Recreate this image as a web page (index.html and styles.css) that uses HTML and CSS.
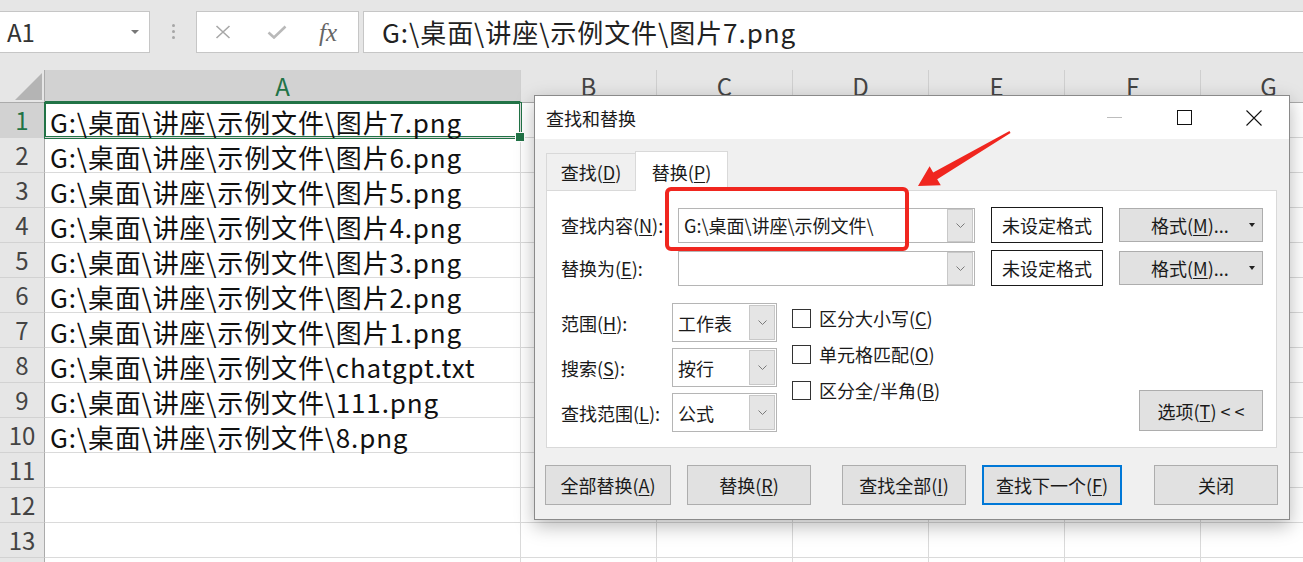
FILE: index.html
```html
<!DOCTYPE html>
<html lang="zh-CN">
<head>
  <meta charset="UTF-8" />
  <title>查找和替换</title>
  <link rel="stylesheet" href="styles.css">
</head>
<body>
<div class="app">

  <!-- barre de formule -->
  <div class="formula-bar">
    <div class="name-box"><span>A1</span><span class="caret"></span></div>
    <div class="grip"><i></i><i></i><i></i></div>
    <div class="fx-box">
      <svg class="ico-x" width="16" height="14" viewBox="0 0 16 14"><path d="M1.5 1 L14.5 13 M14.5 1 L1.5 13" stroke="#a8a8a8" stroke-width="1.6" fill="none"/></svg>
      <svg class="ico-ok" width="20" height="14" viewBox="0 0 20 14"><path d="M1.5 7.5 L7 12.5 L18.5 1.5" stroke="#b9b9b9" stroke-width="2.6" fill="none"/></svg>
      <span class="fx">fx</span>
    </div>
    <div class="formula-input">G:\桌面\讲座\示例文件\图片7.png</div>
  </div>

  <!-- feuille -->
  <div class="sheet">
    <div class="corner"></div>
    <div class="ch on">A</div><div class="ch">B</div><div class="ch">C</div><div class="ch">D</div><div class="ch">E</div><div class="ch">F</div><div class="ch">G</div>

    <div class="rh on">1</div><div class="c sel">G:\桌面\讲座\示例文件\图片7.png</div><div class="c"></div><div class="c"></div><div class="c"></div><div class="c"></div><div class="c"></div><div class="c"></div>
    <div class="rh">2</div><div class="c">G:\桌面\讲座\示例文件\图片6.png</div><div class="c"></div><div class="c"></div><div class="c"></div><div class="c"></div><div class="c"></div><div class="c"></div>
    <div class="rh">3</div><div class="c">G:\桌面\讲座\示例文件\图片5.png</div><div class="c"></div><div class="c"></div><div class="c"></div><div class="c"></div><div class="c"></div><div class="c"></div>
    <div class="rh">4</div><div class="c">G:\桌面\讲座\示例文件\图片4.png</div><div class="c"></div><div class="c"></div><div class="c"></div><div class="c"></div><div class="c"></div><div class="c"></div>
    <div class="rh">5</div><div class="c">G:\桌面\讲座\示例文件\图片3.png</div><div class="c"></div><div class="c"></div><div class="c"></div><div class="c"></div><div class="c"></div><div class="c"></div>
    <div class="rh">6</div><div class="c">G:\桌面\讲座\示例文件\图片2.png</div><div class="c"></div><div class="c"></div><div class="c"></div><div class="c"></div><div class="c"></div><div class="c"></div>
    <div class="rh">7</div><div class="c">G:\桌面\讲座\示例文件\图片1.png</div><div class="c"></div><div class="c"></div><div class="c"></div><div class="c"></div><div class="c"></div><div class="c"></div>
    <div class="rh">8</div><div class="c">G:\桌面\讲座\示例文件\chatgpt.txt</div><div class="c"></div><div class="c"></div><div class="c"></div><div class="c"></div><div class="c"></div><div class="c"></div>
    <div class="rh">9</div><div class="c">G:\桌面\讲座\示例文件\111.png</div><div class="c"></div><div class="c"></div><div class="c"></div><div class="c"></div><div class="c"></div><div class="c"></div>
    <div class="rh">10</div><div class="c">G:\桌面\讲座\示例文件\8.png</div><div class="c"></div><div class="c"></div><div class="c"></div><div class="c"></div><div class="c"></div><div class="c"></div>
    <div class="rh">11</div><div class="c"></div><div class="c"></div><div class="c"></div><div class="c"></div><div class="c"></div><div class="c"></div><div class="c"></div>
    <div class="rh">12</div><div class="c"></div><div class="c"></div><div class="c"></div><div class="c"></div><div class="c"></div><div class="c"></div><div class="c"></div>
    <div class="rh">13</div><div class="c"></div><div class="c"></div><div class="c"></div><div class="c"></div><div class="c"></div><div class="c"></div><div class="c"></div>
    <div class="rh"></div><div class="c"></div><div class="c"></div><div class="c"></div><div class="c"></div><div class="c"></div><div class="c"></div><div class="c"></div>
  </div>

  <!-- boîte de dialogue -->
  <div class="dialog">
    <div class="dlg-title">
      <span class="t">查找和替换</span>
      <div class="win-btn"><span class="min-line"></span></div>
      <div class="win-btn"><span class="max-sq"></span></div>
      <div class="win-btn"><svg width="16" height="16" viewBox="0 0 16 16"><path d="M0.5 0.5 L15.5 15.5 M15.5 0.5 L0.5 15.5" stroke="#111" stroke-width="1.1" fill="none"/></svg></div>
    </div>

    <div class="dlg-body">
      <div class="tabs">
        <div class="tab">查找(<u>D</u>)</div>
        <div class="tab active">替换(<u>P</u>)</div>
      </div>

      <div class="panel">
        <div class="field-row">
          <label>查找内容(<u>N</u>):</label>
          <div class="combo">
            <span>G:\桌面\讲座\示例文件\</span>
            <span class="drop"><svg width="9" height="5" viewBox="0 0 9 5"><polyline points="0.5,0.5 4.5,4.5 8.5,0.5" fill="none" stroke="#7a7a7a" stroke-width="1"/></svg></span>
          </div>
          <div class="fmt-preview">未设定格式</div>
          <div class="btn fmt-btn"><span>格式(<u>M</u>)...</span><span class="tri"></span></div>
        </div>
        <div class="field-row">
          <label>替换为(<u>E</u>):</label>
          <div class="combo">
            <span></span>
            <span class="drop"><svg width="9" height="5" viewBox="0 0 9 5"><polyline points="0.5,0.5 4.5,4.5 8.5,0.5" fill="none" stroke="#7a7a7a" stroke-width="1"/></svg></span>
          </div>
          <div class="fmt-preview">未设定格式</div>
          <div class="btn fmt-btn"><span>格式(<u>M</u>)...</span><span class="tri"></span></div>
        </div>

        <div class="options">
          <div class="opt-selects">
            <div class="sel-row">
              <label>范围(<u>H</u>):</label>
              <div class="select"><span>工作表</span><span class="drop"><svg width="9" height="5" viewBox="0 0 9 5"><polyline points="0.5,0.5 4.5,4.5 8.5,0.5" fill="none" stroke="#7a7a7a" stroke-width="1"/></svg></span></div>
            </div>
            <div class="sel-row">
              <label>搜索(<u>S</u>):</label>
              <div class="select"><span>按行</span><span class="drop"><svg width="9" height="5" viewBox="0 0 9 5"><polyline points="0.5,0.5 4.5,4.5 8.5,0.5" fill="none" stroke="#7a7a7a" stroke-width="1"/></svg></span></div>
            </div>
            <div class="sel-row">
              <label>查找范围(<u>L</u>):</label>
              <div class="select"><span>公式</span><span class="drop"><svg width="9" height="5" viewBox="0 0 9 5"><polyline points="0.5,0.5 4.5,4.5 8.5,0.5" fill="none" stroke="#7a7a7a" stroke-width="1"/></svg></span></div>
            </div>
          </div>

          <div class="opt-checks">
            <div class="check"><span class="box"></span>区分大小写(<u>C</u>)</div>
            <div class="check"><span class="box"></span>单元格匹配(<u>O</u>)</div>
            <div class="check"><span class="box"></span>区分全/半角(<u>B</u>)</div>
          </div>

          <div class="btn opt-btn">选项(<u>T</u>) &lt; &lt;</div>
        </div>
      </div>

      <div class="actions">
        <div class="btn b-all">全部替换(<u>A</u>)</div>
        <div class="btn b-rep">替换(<u>R</u>)</div>
        <div class="btn b-findall">查找全部(<u>I</u>)</div>
        <div class="btn b-next">查找下一个(<u>F</u>)</div>
        <div class="btn b-close">关闭</div>
      </div>
    </div>
  </div>

  <!-- annotations -->
  <svg class="annot" width="1303" height="562" viewBox="0 0 1303 562">
    <rect x="667" y="189" width="240" height="60" rx="4" fill="none" stroke="#f0261f" stroke-width="4"/>
    <polygon points="1009.5,131.1 933.2,172.4 929.6,166.3 918,186 940.8,185.3 937.2,179.2 1010.5,132.9" fill="#f0261f"/>
  </svg>
</div>
</body>
</html>
```

FILE: styles.css
```css
* {
  box-sizing: border-box;
}

body {
  margin: 0;
  font-family: "Noto Sans CJK SC", sans-serif;
  background: #fff;
  color: #222;
  overflow: hidden;
}

.app {
  position: relative;
  width: 1303px;
  height: 562px;
  overflow: hidden;
}

/* Barre de formule */
.formula-bar {
  height: 70px;
  background: #e6e6e6;
  display: flex;
  align-items: flex-start;
  padding-top: 11px;
}

.name-box {
  width: 151px;
  height: 42px;
  margin-left: -1px;
  background: #fff;
  border: 1px solid #c6c6c6;
  display: flex;
  align-items: center;
  justify-content: space-between;
  padding: 0 10px 0 7px;
  font-size: 24px;
  line-height: 1;
  color: #333;
}

.caret {
  border-left: 4px solid transparent;
  border-right: 4px solid transparent;
  border-top: 4px solid #777;
}

.grip {
  width: 46px;
  display: flex;
  flex-direction: column;
  align-items: center;
  gap: 3px;
  padding-top: 13px;
}

.grip i {
  width: 3px;
  height: 3px;
  border-radius: 50%;
  background: #a6a6a6;
}

.fx-box {
  width: 163px;
  height: 42px;
  background: #fff;
  border: 1px solid #c6c6c6;
  display: flex;
  align-items: center;
  padding-left: 18px;
}

.ico-ok {
  margin-left: 36px;
}

.fx {
  margin-left: 32px;
  font-family: "Liberation Serif", serif;
  font-style: italic;
  font-size: 25px;
  color: #666;
  line-height: 1;
}

.formula-input {
  flex: 1;
  margin-left: 4px;
  height: 42px;
  background: #fff;
  border: 1px solid #c6c6c6;
  border-right: none;
  padding-left: 18px;
  font-size: 26px;
  letter-spacing: 0.95px;
  line-height: 39px;
  color: #222;
  white-space: nowrap;
}

/* Feuille */
.sheet {
  display: grid;
  grid-template-columns: 45px 476px repeat(6, 136px);
  grid-template-rows: 33px;
  grid-auto-rows: 35px;
}

.corner {
  background: #e6e6e6;
  border-right: 1px solid #ababab;
  border-bottom: 1px solid #ababab;
  display: flex;
  align-items: flex-end;
  justify-content: flex-end;
  padding: 0 2px 2px 0;
}

.corner::after {
  content: '';
  border-left: 27px solid transparent;
  border-bottom: 27px solid #b4b4b4;
}

.ch {
  background: #e6e6e6;
  border-right: 1px solid #cfcfcf;
  border-bottom: 1px solid #ababab;
  display: flex;
  align-items: center;
  justify-content: center;
  font-size: 24px;
  line-height: 1;
  color: #444;
}

.ch.on {
  background: #d2d2d2;
  color: #217346;
  border-bottom: 2px solid #217346;
}

.rh {
  background: #e6e6e6;
  border-right: 1px solid #ababab;
  border-bottom: 1px solid #d2d2d2;
  display: flex;
  align-items: center;
  justify-content: center;
  font-size: 24px;
  line-height: 1;
  color: #444;
}

.rh.on {
  background: #d2d2d2;
  color: #217346;
}

.c {
  border-right: 1px solid #dadada;
  border-bottom: 1px solid #dadada;
  font-size: 26px;
  letter-spacing: 0.85px;
  line-height: 31px;
  padding: 3px 0 0 5px;
  white-space: nowrap;
  color: #111;
}

.c.sel {
  position: relative;
  z-index: 1;
  box-shadow: 0 0 0 1px #217346, inset 0 0 0 1px #217346;
}

.c.sel::after {
  content: '';
  position: absolute;
  right: -5px;
  bottom: -5px;
  width: 8px;
  height: 8px;
  background: #217346;
  border: 1px solid #fff;
}

/* Boîte de dialogue */
.dialog {
  position: absolute;
  left: 534px;
  top: 95px;
  width: 756px;
  height: 425px;
  z-index: 3;
  background: #f0f0f0;
  border: 1px solid #8a8a8a;
  box-shadow: 0 6px 18px rgba(0, 0, 0, 0.28);
  font-size: 18px;
  color: #1a1a1a;
  display: flex;
  flex-direction: column;
}

.dlg-title {
  height: 43px;
  flex-shrink: 0;
  background: #fff;
  display: flex;
  align-items: center;
  padding-left: 11px;
}

.dlg-title .t {
  flex: 1;
  line-height: 1;
}

.win-btn {
  width: 70px;
  height: 43px;
  display: flex;
  align-items: center;
  justify-content: center;
}

.min-line {
  width: 15px;
  height: 1px;
  background: #bdbdbd;
}

.max-sq {
  width: 15px;
  height: 15px;
  border: 1px solid #111;
}

.dlg-body {
  padding: 12px 11px 0 11px;
}

u {
  text-decoration: underline;
  text-decoration-thickness: 1px;
  text-underline-offset: 2px;
}

.tabs {
  display: flex;
  align-items: flex-end;
  height: 39px;
}

.tab {
  width: 90px;
  height: 37px;
  display: flex;
  align-items: center;
  justify-content: center;
  background: #f0f0f0;
  border: 1px solid #d9d9d9;
  border-bottom: none;
  line-height: 1;
}

.tab.active {
  width: 93px;
  height: 40px;
  margin-left: -1px;
  margin-bottom: -1px;
  background: #fff;
  position: relative;
  z-index: 1;
}

.panel {
  width: 731px;
  height: 258px;
  background: #fff;
  border: 1px solid #d9d9d9;
  padding: 16px 13px 0 14px;
}

.field-row {
  display: flex;
  align-items: center;
  height: 36px;
}

.field-row + .field-row {
  margin-top: 7px;
}

.field-row label {
  width: 117px;
  line-height: 1;
}

.combo {
  width: 297px;
  height: 35px;
  background: #fff;
  border: 1px solid #b5b5b5;
  display: flex;
  align-items: center;
  justify-content: space-between;
  padding: 0 1px 0 5px;
  line-height: 1;
}

.drop {
  width: 26px;
  height: 33px;
  background: #e5e5e5;
  border: 1px solid #c8c8c8;
  display: flex;
  align-items: center;
  justify-content: center;
}

.fmt-preview {
  margin-left: 16px;
  width: 112px;
  height: 36px;
  background: #fff;
  border: 1px solid #1a1a1a;
  display: flex;
  align-items: center;
  justify-content: center;
  line-height: 1;
}

.btn {
  background: #e1e1e1;
  border: 1px solid #adadad;
  display: flex;
  align-items: center;
  justify-content: center;
  line-height: 1;
}

.fmt-btn {
  margin-left: 16px;
  width: 144px;
  height: 34px;
  justify-content: space-between;
  padding: 0 7px 0 31px;
}

.tri {
  border-left: 3.5px solid transparent;
  border-right: 3.5px solid transparent;
  border-top: 4px solid #222;
}

.options {
  display: flex;
  margin-top: 17px;
}

.opt-selects {
  display: flex;
  flex-direction: column;
  gap: 6px;
}

.sel-row {
  display: flex;
  align-items: center;
  height: 39px;
}

.sel-row label {
  width: 111px;
  line-height: 1;
}

.select {
  width: 105px;
  height: 39px;
  background: #fff;
  border: 1px solid #b5b5b5;
  display: flex;
  align-items: center;
  justify-content: space-between;
  padding: 0 1px 0 5px;
  line-height: 1;
}

.select .drop {
  height: 35px;
}

.opt-checks {
  margin-left: 15px;
  display: flex;
  flex-direction: column;
  gap: 6px;
}

.check {
  height: 30px;
  display: flex;
  align-items: center;
  line-height: 1;
}

.box {
  width: 19px;
  height: 19px;
  margin-right: 8px;
  background: #fff;
  border: 1px solid #333;
}

.opt-btn {
  margin-left: auto;
  align-self: flex-end;
  width: 124px;
  height: 41px;
  margin-bottom: 1px;
}

.actions {
  display: flex;
  margin-top: 17px;
  margin-left: -1px;
}

.actions .btn {
  width: 124px;
  height: 40px;
}

.actions .b-all { width: 126px; }
.actions .b-rep { margin-left: 16px; }
.actions .b-findall { margin-left: 31px; }
.actions .b-next {
  width: 140px;
  margin-left: 16px;
  border: 2px solid #0078d7;
}
.actions .b-close { margin-left: 32px; }

/* Annotations */
.annot {
  position: absolute;
  left: 0;
  top: 0;
  z-index: 5;
  pointer-events: none;
}
```
